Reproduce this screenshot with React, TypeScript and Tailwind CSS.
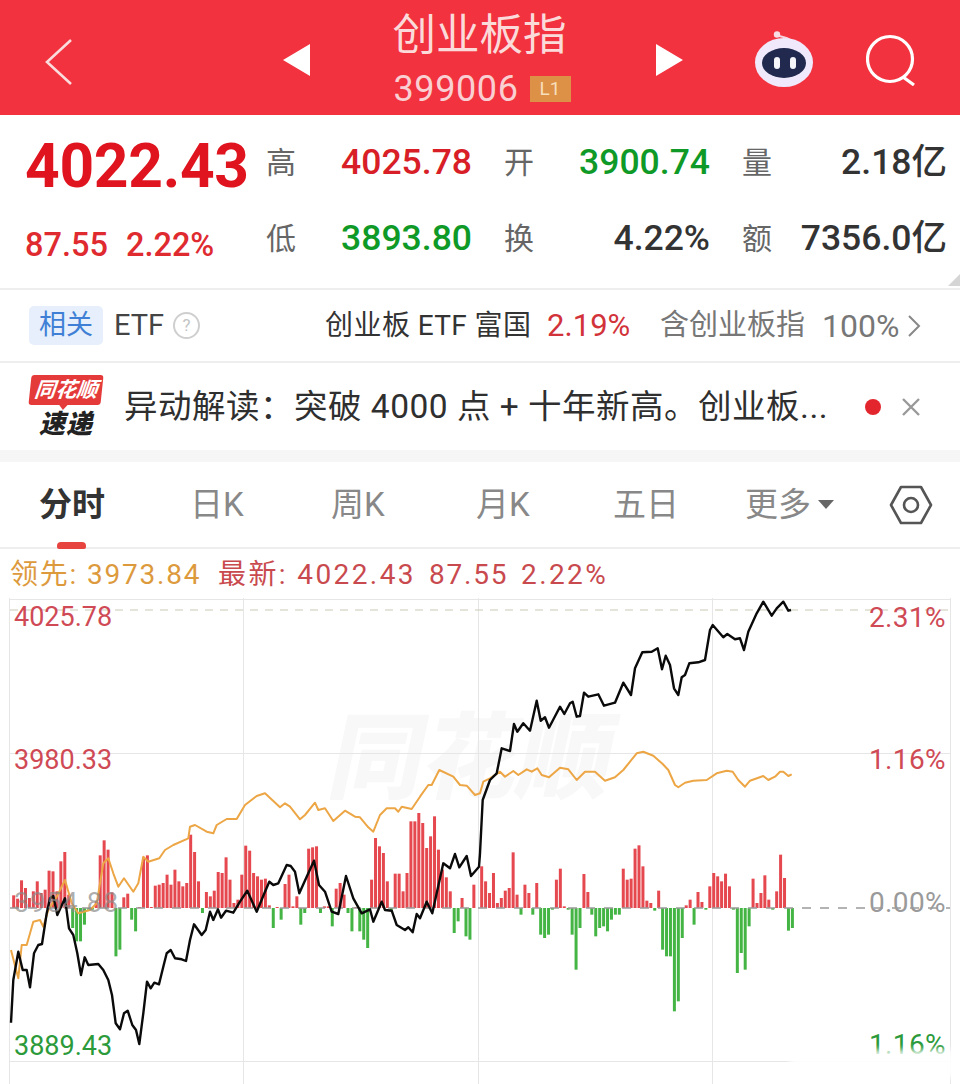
import React from "react";

const blackL = [[33,1298],[40,1170],[55,1085],[68,1140],[80,1140],[90,1192],[102,1090],[115,1065],[126,1062],[140,970],[150,925],[160,918],[172,975],[195,925],[207,1015],[220,1035],[232,1090],[243,1155],[254,1102],[265,1125],[295,1122],[310,1140],[325,1170],[336,1215],[347,1300],[360,1318],[372,1270],[383,1262],[397,1305],[408,1320],[418,1362],[430,1270],[441,1175],[452,1195],[463,1178],[477,1183],[490,1130],[500,1090],[512,1080],[525,1105],[545,1108],[558,1113],[570,1050],[582,1003],[605,1035],[617,1020],[630,965],[640,990],[654,958],[663,983],[678,962],[700,968],[720,935],[742,902],[770,965],[795,905],[808,875],[820,885],[835,880],[860,825],[872,828],[885,845],[898,910],[920,860],[942,812],[957,885],[975,905],[995,965],[1015,972],[1038,858],[1060,925],[1085,970],[1110,958],[1120,995],[1145,935],[1155,960],[1175,962],[1190,1005],[1215,1020],[1225,1012],[1238,1027],[1250,972],[1260,985],[1280,935],[1297,970],[1330,820],[1350,835],[1365,792],[1378,832],[1400,798],[1413,858],[1437,830]];
const blackR = [[0,790],[8,630],[30,570],[50,550],[65,475],[90,483],[102,402],[112,425],[130,400],[150,422],[170,332],[182,392],[195,382],[207,413],[240,350],[253,372],[270,340],[278,335],[290,380],[300,378],[312,308],[325,320],[355,313],[372,347],[405,338],[430,278],[453,315],[465,235],[487,187],[515,185],[533,175],[546,238],[557,197],[570,225],[582,295],[595,315],[605,262],[615,255],[628,220],[655,217],[675,210],[690,120],[698,105],[730,142],[742,132],[765,148],[780,145],[792,180],[805,125],[830,70],[850,35],[875,77],[890,55],[910,35],[925,62],[933,60]];
const orangeL = [[33,1080],[55,1165],[65,1065],[80,1065],[100,995],[120,990],[130,1010],[145,960],[170,920],[195,870],[215,940],[235,970],[270,960],[290,940],[310,820],[325,805],[340,850],[355,890],[372,865],[400,905],[415,880],[430,800],[445,815],[478,805],[495,780],[520,765],[565,745],[570,710],[585,705],[620,725],[640,730],[650,705],[680,687],[710,687],[735,645],[770,618],[795,610],[840,652],[855,640],[870,650],[900,688],[915,675],[945,638],[955,660],[975,655],[1000,693],[1035,662],[1065,680],[1080,682],[1105,712],[1120,725],[1140,675],[1160,655],[1185,655],[1195,665],[1205,650],[1235,657],[1260,620],[1285,585],[1295,585],[1318,540],[1360,560],[1380,585],[1400,587],[1425,615],[1440,610]];
const orangeR = [[0,610],[10,575],[30,565],[60,545],[75,560],[100,543],[115,555],[140,538],[155,545],[172,535],[185,555],[207,562],[240,533],[265,538],[290,570],[315,545],[345,545],[375,572],[405,562],[430,540],[470,490],[490,485],[520,497],[548,522],[565,540],[585,585],[595,592],[615,578],[640,572],[680,570],[710,550],[740,542],[758,545],[775,570],[795,590],[810,572],[850,558],[865,570],[885,560],[900,545],[910,545],[925,558],[935,553]];

const barsL = [38,28,83,60,30,50,80,45,55,112,110,50,140,168,40,-60,-100,-100,-50,-5,-5,20,158,203,175,47,-145,-125,32,43,-35,-70,3,152,158,3,67,70,75,100,70,115,80,65,75,220,168,80,-15,48,35,52,108,105,152,85,15,25,100,187,172,105,95,85,88,8,-60,3,-35,72,100,5,35,-50,-15,178,182,185,-15,5,5,-55,58,75,40,-15,-70,3,-70,-95,-120,85,210,185,165,80,-10,103,103,50,105,260,260,285,255,180,215,275,175,115,92,50,-75,-40,30,-85,-95,70];
const barsR = [125,80,45,105,15,30,52,60,167,40,-20,70,45,-20,75,-80,-90,-80,-5,85,118,5,-5,-80,-185,-60,102,48,-20,-85,-60,-55,-70,-35,-20,-20,118,85,88,178,188,125,22,15,-8,52,-125,-145,-145,-310,-280,-90,8,25,-50,48,18,-5,65,105,95,80,103,65,-5,-195,-135,-185,-55,88,15,45,98,25,-5,50,160,90,-68,-60];

const toPts = (pts: number[][], off: number) =>
  pts.map(([x, y]) => `${((x + off) / 3).toFixed(1)},${(y / 3 - 8).toFixed(1)}`).join(" ");
const BLACK = toPts(blackL, 0) + " " + toPts(blackR, 1440);
const ORANGE = toPts(orangeL, 0) + " " + toPts(orangeR, 1440);
const BASE = 310;
const BARS = [
  ...barsL.map((h, i) => ({ x: (41 + i * 11.8) / 3, h: h / 3 })),
  ...barsR.map((h, i) => ({ x: (1445 + i * 11.8) / 3, h: h / 3 })),
];

function Stat({ label, value, color, w }: { label: string; value: string; color: string; w: string }) {
  return (
    <div className={`flex items-center justify-between ${w}`}>
      <span className="text-[30px] text-[#666] leading-none">{label}</span>
      <span className={`text-[35.5px] font-medium leading-none ${color}`}>{value}</span>
    </div>
  );
}

function Robot() {
  return (
    <svg width="60" height="57" viewBox="0 0 60 57" className="block">
      <path d="M25 5 C28 6 33 6 36 9" stroke="#f6d4de" strokeWidth="2" fill="none" />
      <circle cx="23" cy="3.5" r="3.2" fill="#f8dde5" />
      <ellipse cx="30" cy="31.5" rx="29" ry="24.5" fill="#f0e8fb" />
      <ellipse cx="30" cy="32" rx="22" ry="15" fill="#212a4e" />
      <rect x="20" y="26" width="6" height="12" rx="3" fill="#f5f5fa" />
      <rect x="36" y="26" width="6" height="12" rx="3" fill="#f5f5fa" />
    </svg>
  );
}

function Logo() {
  return (
    <div className="flex flex-col items-center w-[74px]">
      <div className="relative w-[72px] h-[30px] bg-[#e53a3a] rounded-[3px] -skew-x-6 flex items-center justify-center">
        <span className="text-white font-bold italic text-[21px] leading-none">同花顺</span>
        <span className="absolute left-[30px] -bottom-[5px] w-0 h-0 border-l-[5px] border-r-[5px] border-t-[6px] border-l-transparent border-r-transparent border-t-[#e53a3a]" />
      </div>
      <span className="mt-[5px] text-[#222] font-black italic text-[26px] leading-[28px] tracking-[1px]">速递</span>
    </div>
  );
}

function Tab({ label, w, active }: { label: string; w: string; active?: boolean }) {
  return <span className={`${w} text-[33px] leading-none ${active ? "font-bold text-[#333]" : "text-[#888]"}`}>{label}</span>;
}

export default function App() {
  return (
    <div className="w-[960px] h-[1084px] overflow-hidden bg-white font-['Roboto','Noto_Sans_CJK_SC',sans-serif]">
      {/* header */}
      <header className="h-[115px] bg-[#f2323f] flex items-center">
        <svg width="30" height="48" viewBox="0 0 30 48" className="ml-[44px] mt-[8px]">
          <path d="M27 2 L3 24 L27 46" stroke="#fbdcdc" strokeWidth="2.6" fill="none" />
        </svg>
        <svg width="27" height="32" viewBox="0 0 27 32" className="ml-[209px] mt-[4px]">
          <path d="M27 0 V32 L0 16 Z" fill="#fff" />
        </svg>
        <div className="w-[346px] flex flex-col items-center">
          <span className="mt-[3px] text-[43.5px] leading-[50px] text-[#fbdada] mr-[7px]">创业板指</span>
          <div className="flex items-center mt-[9px] h-[38px] mr-[2px]">
            <span className="text-[36px] leading-none text-[#f9cfd2] tracking-[0.6px]">399006</span>
            <span className="ml-[11px] w-[41px] h-[26px] bg-[#dd9147] text-[#f8dfbb] text-[19px] leading-[26px] text-center">L1</span>
          </div>
        </div>
        <svg width="27" height="32" viewBox="0 0 27 32" className="mt-[4px]">
          <path d="M0 0 V32 L27 16 Z" fill="#fff" />
        </svg>
        <div className="ml-[71px] mt-[4px]"><Robot /></div>
        <svg width="52" height="52" viewBox="0 0 52 52" className="ml-[52px] mt-[4px]">
          <circle cx="24" cy="25" r="22.5" stroke="#fff" strokeWidth="3.2" fill="none" />
          <path d="M37 43 L48 51" stroke="#fff" strokeWidth="3.2" />
        </svg>
      </header>

      {/* quote */}
      <section className="relative h-[175px] border-b-2 border-[#eeeeee] pl-[25px] pr-[13px] flex">
        <div className="w-[242px] flex flex-col">
          <span className="mt-[19px] text-[60.5px] leading-[66px] font-bold text-[#df141e] tracking-[-0.3px]">4022.43</span>
          <div className="mt-[29px] flex gap-[18px] text-[32.5px] leading-none font-medium text-[#df2a30]">
            <span>87.55</span>
            <span>2.22%</span>
          </div>
        </div>
        <div className="flex-1 flex flex-col mt-[29px] gap-[39px]">
          <div className="flex h-[37px]">
            <Stat label="高" value="4025.78" color="text-[#d81e26]" w="w-[206px]" />
            <div className="w-[32px]" />
            <Stat label="开" value="3900.74" color="text-[#0f9a28]" w="w-[206px]" />
            <div className="w-[32px]" />
            <Stat label="量" value="2.18亿" color="text-[#333]" w="w-[205px]" />
          </div>
          <div className="flex h-[37px]">
            <Stat label="低" value="3893.80" color="text-[#0f9a28]" w="w-[206px]" />
            <div className="w-[32px]" />
            <Stat label="换" value="4.22%" color="text-[#333]" w="w-[206px]" />
            <div className="w-[32px]" />
            <Stat label="额" value="7356.0亿" color="text-[#333]" w="w-[205px]" />
          </div>
        </div>
        <span className="absolute right-0 bottom-[2px] w-0 h-0 border-l-[12px] border-t-[12px] border-l-transparent border-t-transparent border-b-0 border-r-[12px] border-r-[#d5d5d5]" />
      </section>

      {/* ETF */}
      <section className="h-[73px] border-b-2 border-[#eeeeee] flex items-center pl-[29px]">
        <span className="w-[74px] h-[39px] rounded-[5px] bg-[#e6effb] text-[#3f7fd6] text-[27px] leading-[39px] text-center">相关</span>
        <span className="ml-[11px] text-[29px] leading-none text-[#444]">ETF</span>
        <span className="ml-[9px] w-[27px] h-[27px] rounded-full border-2 border-[#cfcfcf] text-[#c4c4c4] text-[17px] leading-[23px] text-center">?</span>
        <span className="ml-[125px] w-[222px] text-[28px] tracking-[0.4px] leading-none text-[#333] whitespace-nowrap">创业板 ETF 富国</span>
        <span className="text-[31px] leading-none text-[#d2333a] w-[113px]">2.19%</span>
        <span className="text-[29px] leading-none text-[#777] w-[162px] whitespace-nowrap">含创业板指</span>
        <span className="text-[32px] leading-none text-[#777] w-[85px]">100%</span>
        <svg width="14" height="24" viewBox="0 0 14 24">
          <path d="M2 2 L12 12 L2 22" stroke="#888" strokeWidth="2" fill="none" />
        </svg>
      </section>

      {/* news */}
      <section className="h-[87px] flex items-center pl-[29px]">
        <Logo />
        <span className="ml-[21px] w-[741px] text-[33.5px] tracking-[0.5px] leading-none text-[#2f2f2f] whitespace-nowrap">{"异动解读\uFF1A突破 4000 点 + 十年新高。创业板..."}</span>
        <span className="w-[16px] h-[16px] rounded-full bg-[#e3262e]" />
        <svg width="20" height="20" viewBox="0 0 20 20" className="ml-[20px]">
          <path d="M2 2 L18 18 M18 2 L2 18" stroke="#999" strokeWidth="2.4" />
        </svg>
      </section>
      <div className="h-[12px] bg-[#f6f6f6]" />

      {/* tabs */}
      <nav className="relative h-[87px] border-b-2 border-[#eeeeee] flex items-center pl-[39px]">
        <Tab label="分时" w="w-[151px]" active />
        <Tab label="日K" w="w-[141px]" />
        <Tab label="周K" w="w-[145px]" />
        <Tab label="月K" w="w-[137px]" />
        <Tab label="五日" w="w-[132px]" />
        <Tab label="更多" w="w-[73px]" />
        <span className="w-0 h-0 border-l-[8px] border-r-[8px] border-t-[9px] border-l-transparent border-r-transparent border-t-[#666]" />
        <svg width="44" height="44" viewBox="0 0 44 44" className="ml-[55px]">
          <path d="M12 4 H32 L42 22 L32 40 H12 L2 22 Z" stroke="#555" strokeWidth="2.6" fill="none" strokeLinejoin="round" />
          <circle cx="22" cy="22" r="7" stroke="#555" strokeWidth="2.6" fill="none" />
        </svg>
        <span className="absolute left-[57px] bottom-[-2px] w-[29px] h-[7px] rounded-t-[4px] rounded-b-[2px] bg-[#e8443f]" />
      </nav>

      {/* info */}
      <div className="h-[49px] flex items-center pl-[10px] pt-[3px] text-[28px] tracking-[1.8px] leading-none whitespace-nowrap">
        <span className="text-[#dd9a3d] w-[208px]">领先: 3973.84</span>
        <span className="text-[#c94a4e] w-[211px] tracking-[2.4px]">最新: 4022.43</span>
        <span className="text-[#c94a4e] w-[92px]">87.55</span>
        <span className="text-[#c94a4e] tracking-[2.4px]">2.22%</span>
      </div>

      {/* chart */}
      <div className="relative h-[486px]">
        <span className="absolute left-[332px] top-[106px] -skew-x-12 text-[94px] leading-[110px] font-black text-[#f8f8f8] whitespace-nowrap">同花顺</span>
        <svg width="960" height="486" viewBox="0 0 960 486" className="absolute left-0 top-0">
          <g stroke="#e6e6e6" strokeWidth="1" fill="none">
            <path d="M9.5 0 V486 M950.5 0 V486 M243.5 0 V486 M478.5 0 V486 M712.5 0 V486" />
            <path d="M9 1.5 H951 M9 155.5 H951 M9 463.5 H951" />
          </g>
          <path d="M10 12 H950" stroke="#c9c9b8" strokeWidth="1.2" strokeDasharray="8 7" />
          {BARS.map((b, i) => (
            <rect
              key={i}
              x={b.x - 1.5}
              width={3}
              y={b.h > 0 ? BASE - b.h : BASE}
              height={Math.abs(b.h)}
              fill={b.h > 0 ? "#e5484f" : "#44b544"}
            />
          ))}
          <path d="M10 310 H950" stroke="#9a9a9a" strokeWidth="1.4" strokeDasharray="9 9" />
          <polyline points={ORANGE} fill="none" stroke="#eda645" strokeWidth="2" strokeLinejoin="round" />
          <polyline points={BLACK} fill="none" stroke="#0a0a0a" strokeWidth="2.4" strokeLinejoin="round" />
        </svg>
        <span className="absolute left-[14px] top-[4px] text-[27px] leading-[30px] text-[#cf4a55]">4025.78</span>
        <span className="absolute left-[14px] top-[147px] text-[27px] leading-[30px] text-[#cf4a55]">3980.33</span>
        <span className="absolute left-[14px] top-[290px] text-[27px] leading-[30px] tracking-[1px] text-[#8a8a8a]/70">3954.88</span>
        <span className="absolute left-[14px] top-[433px] text-[27px] leading-[30px] text-[#2b9a3a]">3889.43</span>
        <span className="absolute right-[14px] top-[5px] text-[28px] leading-[30px] tracking-[0.4px] text-[#cf4a55]">2.31%</span>
        <span className="absolute right-[14px] top-[147px] text-[28px] leading-[30px] tracking-[0.4px] text-[#cf4a55]">1.16%</span>
        <span className="absolute right-[14px] top-[290px] text-[28px] leading-[30px] tracking-[0.4px] text-[#9a9a9a]">0.00%</span>
        <span className="absolute right-[14px] top-[432px] text-[28px] leading-[30px] tracking-[0.4px] text-[#2b9a3a]">1.16%</span>
        <div className="absolute left-[790px] top-[452px] w-[170px] h-[28px] bg-white/90 blur-[3px]" />
      </div>
    </div>
  );
}
